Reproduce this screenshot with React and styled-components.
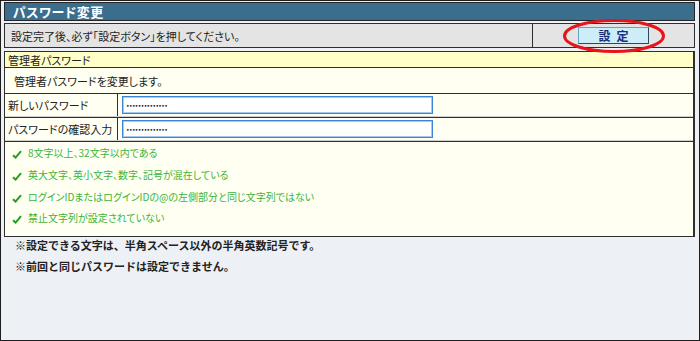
import React from "react";
import styled, { createGlobalStyle } from "styled-components";

const Global = createGlobalStyle`
  html, body { margin: 0; padding: 0; background: #ffffff; }
  body { font-family: "Noto Sans CJK JP", "Liberation Sans", sans-serif; }
  * { box-sizing: border-box; }
`;

const Frame = styled.div`
  width: 700px;
  height: 341px;
  border: 1px solid #1e1e1e;
  background: #edf1f5;
  padding: 1px 4px 0 3px;
  display: flex;
  flex-direction: column;
  font-size: 11px;
  color: #222;
  font-feature-settings: "palt";
`;

const TitleBar = styled.div`
  height: 19px;
  border: 1px solid #262626;
  background: #3b6d8d;
  color: #ffffff;
  font-weight: bold;
  font-size: 13px;
  padding-left: 8px;
  display: flex;
  align-items: center;
  letter-spacing: 0.5px;
`;

const ActionRow = styled.div`
  margin-top: 2px;
  height: 25px;
  border: 1px solid #2e2e2e;
  background: #e4e4e4;
  display: grid;
  grid-template-columns: 1fr 162px;
`;

const ActionText = styled.div`
  display: flex;
  align-items: center;
  padding-left: 6px;
`;

const ButtonCell = styled.div`
  position: relative;
  border-left: 1px solid #2e2e2e;
  display: flex;
  align-items: center;
  justify-content: center;
`;

const SetButton = styled.button`
  width: 71px;
  height: 17px;
  padding: 0;
  background: #cdeef9;
  border: 1px solid #5aa7c8;
  border-bottom-color: #2a4b5a;
  border-right-color: #2a4b5a;
  color: #1b2c7c;
  font-family: inherit;
  font-weight: bold;
  font-size: 12px;
  letter-spacing: 6px;
  text-indent: 6px;
  line-height: 15px;
`;

const Ring = styled.svg`
  position: absolute;
  left: 50%;
  top: 50%;
  transform: translate(-50%, -50%);
  pointer-events: none;
  overflow: visible;
`;

const Section = styled.div`
  margin-top: 3px;
  border: 1px solid #2e2e2e;
  border-right-width: 2px;
  background: #fffff2;
`;

const SectionHeader = styled.div`
  height: 16px;
  background: #ffffc8;
  border-bottom: 1px solid #2e2e2e;
  padding-left: 3px;
  display: flex;
  align-items: center;
`;

const Description = styled.div`
  height: 25px;
  padding-left: 9px;
  display: flex;
  align-items: center;
`;

const FieldRow = styled.div`
  display: grid;
  grid-template-columns: 113px 1fr;
  height: 24px;
  border-top: 1px solid #2e2e2e;
  border-bottom: 1px solid #cfcfcf;
`;

const FieldLabel = styled.div`
  border-right: 1px solid #2e2e2e;
  padding-left: 3px;
  display: flex;
  align-items: center;
`;

const FieldCell = styled.div`
  padding-left: 4px;
  display: flex;
  align-items: center;
`;

const PasswordInput = styled.input`
  width: 311px;
  height: 18px;
  border: 1px solid #3a84d6;
  box-shadow: 0 0 0 1px #a6c9ef inset;
  background: #ffffff;
  padding: 0 3px;
  font-size: 6px;
  letter-spacing: -0.6px;
  font-family: "DejaVu Sans", sans-serif;
  color: #111;
  outline: none;
`;

const Checklist = styled.ul`
  list-style: none;
  margin: 0;
  padding: 0 0 7px 0;
  border-top: 1px solid #2e2e2e;
`;

const CheckItem = styled.li`
  height: 21.7px;
  display: flex;
  align-items: center;
  padding-left: 7px;
  color: #3cb43c;
  font-size: 10px;
`;

const CheckIcon = styled.svg`
  flex: none;
  margin-right: 6px;
  margin-top: 4px;
`;

const Notes = styled.div`
  margin-top: -2px;
  padding-left: 11px;
  font-weight: bold;
  line-height: 21px;
  color: #222;
  font-feature-settings: normal;
`;

const Check = () => (
  <CheckIcon width="10" height="9" viewBox="0 0 10 9">
    <path d="M1 5.2 L3.6 7.6 L9 1.2" fill="none" stroke="#23a023" strokeWidth="2" />
  </CheckIcon>
);

const rules = [
  "8文字以上、32文字以内である",
  "英大文字、英小文字、数字、記号が混在している",
  "ログインIDまたはログインIDの@の左側部分と同じ文字列ではない",
  "禁止文字列が設定されていない",
];

export default function App() {
  return (
    <>
      <Global />
      <Frame>
        <TitleBar>パスワード変更</TitleBar>
        <ActionRow>
          <ActionText>設定完了後、必ず「設定ボタン」を押してください。</ActionText>
          <ButtonCell>
            <SetButton type="button">設定</SetButton>
            <Ring width="102" height="34" viewBox="0 0 102 34">
              <ellipse cx="51" cy="17" rx="49.5" ry="15.5" fill="none" stroke="#e8141b" strokeWidth="3" />
            </Ring>
          </ButtonCell>
        </ActionRow>
        <Section>
          <SectionHeader>管理者パスワード</SectionHeader>
          <Description>管理者パスワードを変更します。</Description>
          <FieldRow>
            <FieldLabel>新しいパスワード</FieldLabel>
            <FieldCell>
              <PasswordInput type="password" readOnly value="aaaaaaaaaaaaaa" />
            </FieldCell>
          </FieldRow>
          <FieldRow>
            <FieldLabel>パスワードの確認入力</FieldLabel>
            <FieldCell>
              <PasswordInput type="password" readOnly value="aaaaaaaaaaaaaa" />
            </FieldCell>
          </FieldRow>
          <Checklist>
            {rules.map((r) => (
              <CheckItem key={r}>
                <Check />
                {r}
              </CheckItem>
            ))}
          </Checklist>
        </Section>
        <Notes>
          <div>※設定できる文字は、半角スペース以外の半角英数記号です。</div>
          <div>※前回と同じパスワードは設定できません。</div>
        </Notes>
      </Frame>
    </>
  );
}
